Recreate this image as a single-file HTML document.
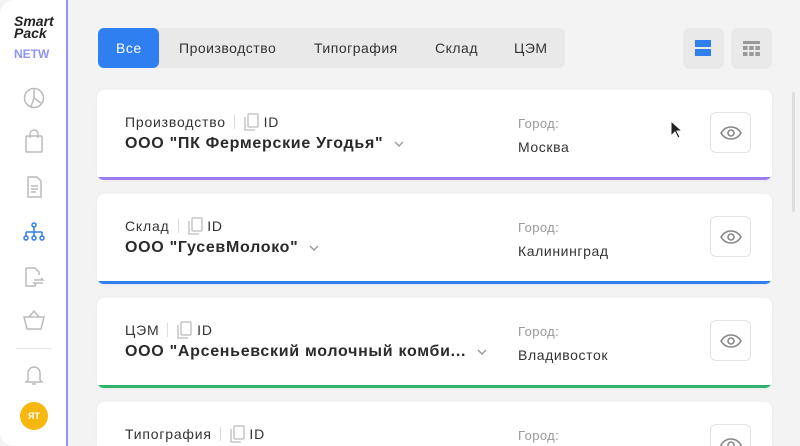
<!DOCTYPE html>
<html style="width:800px;height:446px;overflow:hidden"><head><meta charset="utf-8"><style>
*{box-sizing:border-box;margin:0;padding:0}
body{width:800px;height:446px;overflow:hidden;background:#f3f3f3;font-family:"Liberation Sans","Noto Sans CJK SC",sans-serif;position:relative;color:#333}
.side{position:absolute;left:0;top:0;width:68px;height:446px;background:#fff;border-right:2px solid #8f93f5;border-radius:14px 0 0 14px}
.abs{position:absolute}
.tabs{position:absolute;left:98px;top:28px;width:467px;height:40px;background:#e9e9e9;border-radius:6px}
.tab{position:absolute;top:0;height:40px;line-height:40px;font-size:14px;color:#333;letter-spacing:0.5px}
.card{position:absolute;left:97px;width:675px;height:90px;background:#fff;border-radius:7px;overflow:hidden;box-shadow:0 1px 3px rgba(0,0,0,.05)}
.card .bar{position:absolute;left:0;right:0;bottom:0;height:3px}
.lbl{position:absolute;left:28px;top:23px;font-size:14px;color:#333;display:flex;align-items:center;letter-spacing:0.8px}
.name{position:absolute;left:28px;top:45px;font-size:16px;font-weight:bold;color:#2a2a2a;letter-spacing:0.7px}
.city1{position:absolute;left:421px;top:26px;font-size:13px;color:#999;letter-spacing:0.4px}
.city2{position:absolute;left:421px;top:49px;font-size:14px;color:#333;letter-spacing:0.6px}
.eye{position:absolute;left:613px;top:22px;width:41px;height:41px;border:1px solid #e3e3e3;border-radius:6px;display:flex;align-items:center;justify-content:center}
.sep{width:1px;height:14px;background:#ddd;margin:0 8px}
.chev{display:inline-block;margin-left:10px;vertical-align:middle}
</style></head><body>
<div class="side">
<div class="abs" style="left:14px;top:15px;font-size:14px;font-weight:bold;font-style:italic;line-height:12px;color:#222">Smart<br>Pack</div>
<div class="abs" style="left:14px;top:47px;font-size:12px;font-weight:bold;color:#8f93f5">NETW</div>
<svg class="abs" style="left:22px;top:86px" width="24" height="24" viewBox="0 0 24 24" fill="none" stroke="#bbb" stroke-width="1.5"><circle cx="12" cy="12" r="9.5"/><path d="M12 2.5V12l7 5M12 12l-3 8.5"/></svg>
<svg class="abs" style="left:22px;top:128px" width="24" height="26" viewBox="0 0 24 26" fill="none" stroke="#bbb" stroke-width="1.5"><rect x="4" y="8" width="16" height="16" rx="1"/><path d="M8 10V6a4 4 0 0 1 8 0v4"/></svg>
<svg class="abs" style="left:23px;top:175px" width="22" height="24" viewBox="0 0 22 24" fill="none" stroke="#bbb" stroke-width="1.5"><path d="M5 2h9l4 4v16H5z"/><path d="M8 11h7M8 14h7M8 17h5"/></svg>
<svg class="abs" style="left:22px;top:222px" width="24" height="20" viewBox="0 0 24 20" fill="none" stroke="#2f7ff0" stroke-width="1.5"><circle cx="12" cy="3" r="2"/><path d="M12 5v5M4 10h16M4 10v4M12 10v4M20 10v4"/><circle cx="4" cy="16" r="2"/><circle cx="12" cy="16" r="2"/><circle cx="20" cy="16" r="2"/></svg>
<svg class="abs" style="left:23px;top:264px" width="24" height="26" viewBox="0 0 24 26" fill="none" stroke="#bbb" stroke-width="1.5"><path d="M3 4h9l4 4v3M3 4v18h10"/><path d="M11 16h9l-2-2M20 19h-9l2 2"/></svg>
<svg class="abs" style="left:22px;top:308px" width="24" height="24" viewBox="0 0 24 24" fill="none" stroke="#bbb" stroke-width="1.5"><path d="M2 9h20l-3 12H5z"/><path d="M7 9l5-6 5 6"/></svg>
<div class="abs" style="left:16px;top:348px;width:36px;height:1px;background:#e6e6e6"></div>
<svg class="abs" style="left:23px;top:363px" width="22" height="24" viewBox="0 0 22 24" fill="none" stroke="#bbb" stroke-width="1.5"><path d="M5 17V10a6 6 0 0 1 12 0v7l2 2H3z"/><path d="M9 21h4"/></svg>
<div class="abs" style="left:20px;top:402px;width:28px;height:28px;border-radius:50%;background:#f6b70f;color:#fff;font-size:9px;font-weight:bold;line-height:28px;text-align:center">ЯТ</div>
</div>

<div class="tabs">
<div class="abs" style="left:0;top:0;width:61px;height:40px;background:#2f7ff0;border-radius:6px"></div>
<div class="tab" style="left:18px;color:#fff">Все</div>
<div class="tab" style="left:81px">Производство</div>
<div class="tab" style="left:216px">Типография</div>
<div class="tab" style="left:337px">Склад</div>
<div class="tab" style="left:416px">ЦЭМ</div>
</div>
<div class="abs" style="left:683px;top:28px;width:41px;height:41px;background:#e9e9e9;border-radius:7px"><div class="abs" style="left:12px;top:12px;width:16px;height:7px;background:#2f7ff0"></div><div class="abs" style="left:12px;top:21px;width:16px;height:7px;background:#2f7ff0"></div></div>
<div class="abs" style="left:731px;top:28px;width:41px;height:41px;background:#e9e9e9;border-radius:7px">
<svg class="abs" style="left:12px;top:13px" width="17" height="15" viewBox="0 0 17 15" fill="#999"><rect x="0" y="0" width="17" height="3"/><rect x="0" y="5" width="4.5" height="4"/><rect x="6.2" y="5" width="4.5" height="4"/><rect x="12.4" y="5" width="4.5" height="4"/><rect x="0" y="11" width="4.5" height="4"/><rect x="6.2" y="11" width="4.5" height="4"/><rect x="12.4" y="11" width="4.5" height="4"/></svg></div>
<div class="abs" style="left:792px;top:92px;width:3px;height:120px;background:#ddd;border-radius:2px"></div>

<div class="card" style="top:90px"><div class="lbl">Производство<span class="sep"></span><svg width="16" height="18" viewBox="0 0 16 18" fill="none" stroke="#bbb" stroke-width="1.3"><rect x="5" y="1" width="10" height="13" rx="1"/><path d="M2 4v13h10"/></svg>&nbsp;ID</div>
<div class="name">ООО "ПК Фермерские Угодья"<svg class="chev" width="12" height="8" viewBox="0 0 12 8" fill="none" stroke="#999" stroke-width="1.4"><path d="M2 2l4 4 4-4"/></svg></div>
<div class="city1">Город:</div><div class="city2">Москва</div>
<div class="eye"><svg width="22" height="14" viewBox="0 0 22 14" fill="none" stroke="#888" stroke-width="1.6"><path d="M1 7C4 2 8 1 11 1s7 1 10 6c-3 5-7 6-10 6S4 12 1 7z"/><circle cx="11" cy="7" r="3"/></svg></div>
<div class="bar" style="background:#9b7df0"></div></div>

<div class="card" style="top:194px"><div class="lbl">Склад<span class="sep"></span><svg width="16" height="18" viewBox="0 0 16 18" fill="none" stroke="#bbb" stroke-width="1.3"><rect x="5" y="1" width="10" height="13" rx="1"/><path d="M2 4v13h10"/></svg>&nbsp;ID</div>
<div class="name">ООО "ГусевМолоко"<svg class="chev" width="12" height="8" viewBox="0 0 12 8" fill="none" stroke="#999" stroke-width="1.4"><path d="M2 2l4 4 4-4"/></svg></div>
<div class="city1">Город:</div><div class="city2">Калининград</div>
<div class="eye"><svg width="22" height="14" viewBox="0 0 22 14" fill="none" stroke="#888" stroke-width="1.6"><path d="M1 7C4 2 8 1 11 1s7 1 10 6c-3 5-7 6-10 6S4 12 1 7z"/><circle cx="11" cy="7" r="3"/></svg></div>
<div class="bar" style="background:#2f7ff0"></div></div>

<div class="card" style="top:298px"><div class="lbl">ЦЭМ<span class="sep"></span><svg width="16" height="18" viewBox="0 0 16 18" fill="none" stroke="#bbb" stroke-width="1.3"><rect x="5" y="1" width="10" height="13" rx="1"/><path d="M2 4v13h10"/></svg>&nbsp;ID</div>
<div class="name">ООО "Арсеньевский молочный комби...<svg class="chev" width="12" height="8" viewBox="0 0 12 8" fill="none" stroke="#999" stroke-width="1.4"><path d="M2 2l4 4 4-4"/></svg></div>
<div class="city1">Город:</div><div class="city2">Владивосток</div>
<div class="eye"><svg width="22" height="14" viewBox="0 0 22 14" fill="none" stroke="#888" stroke-width="1.6"><path d="M1 7C4 2 8 1 11 1s7 1 10 6c-3 5-7 6-10 6S4 12 1 7z"/><circle cx="11" cy="7" r="3"/></svg></div>
<div class="bar" style="background:#2fb36b"></div></div>

<div class="card" style="top:402px;height:44px;border-radius:7px 7px 0 0"><div class="lbl">Типография<span class="sep"></span><svg width="16" height="18" viewBox="0 0 16 18" fill="none" stroke="#bbb" stroke-width="1.3"><rect x="5" y="1" width="10" height="13" rx="1"/><path d="M2 4v13h10"/></svg>&nbsp;ID</div>
<div class="city1">Город:</div>
<div class="eye"><svg width="22" height="14" viewBox="0 0 22 14" fill="none" stroke="#888" stroke-width="1.6"><path d="M1 7C4 2 8 1 11 1s7 1 10 6c-3 5-7 6-10 6S4 12 1 7z"/><circle cx="11" cy="7" r="3"/></svg></div></div>

<svg class="abs" style="left:670px;top:120px" width="14" height="20" viewBox="0 0 14 20"><path d="M1 1v15l4-4 3 6 2-1-3-6h5z" fill="#222" stroke="#fff" stroke-width="1"/></svg>
</body></html>
